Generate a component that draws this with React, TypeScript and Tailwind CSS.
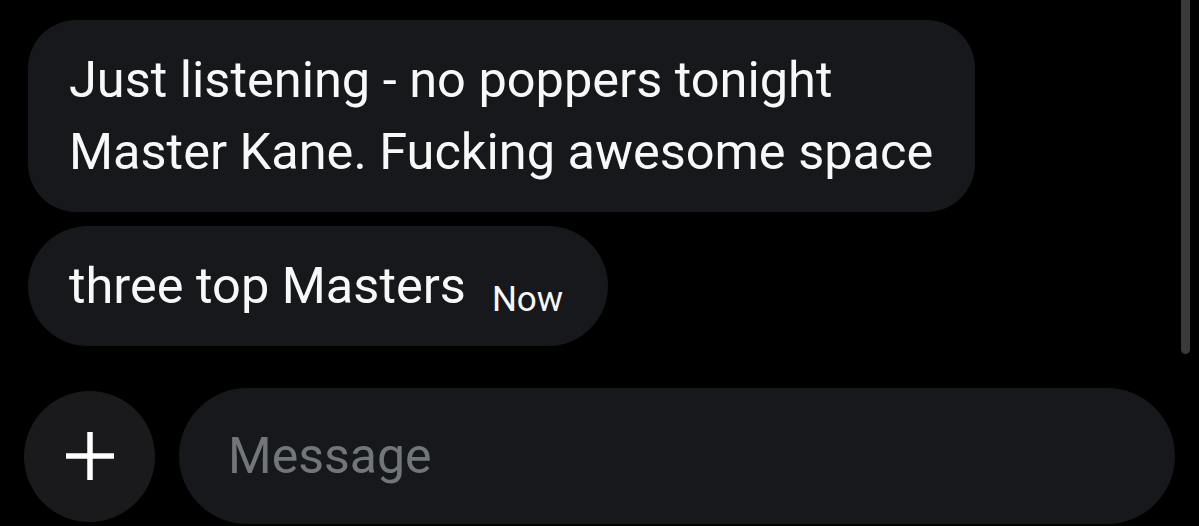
import React from "react";

export default function App() {
  return (
    <div
      className="relative w-[1199px] h-[526px] overflow-hidden bg-black text-[#f7f9f9]"
      style={{ fontFamily: "Roboto, 'Noto Sans', sans-serif" }}
    >
      <div className="absolute right-[9px] top-[-10px] w-[9px] h-[364px] rounded-full bg-[#3a3a3c]" />
      <div className="flex flex-col pl-[28px] pt-[20px]">
        <div className="w-[947px] rounded-[48px] bg-[#16181c] pl-[41px] py-[24px] text-[50.5px] leading-[72px] whitespace-nowrap">
          <div>Just listening - no poppers tonight</div>
          <div>Master Kane. Fucking awesome space</div>
        </div>
        <div className="mt-[14px] w-[580px] h-[120px] flex items-center rounded-full bg-[#16181c] pl-[41px] text-[50.5px] whitespace-nowrap">
          <span className="leading-[72px]">three top Masters</span>
          <span className="ml-[26px] mt-[26px] text-[35px] leading-none">Now</span>
        </div>
      </div>
      <div className="flex items-center gap-[24px] pl-[24px] pr-[24px] mt-[42px]">
        <div className="flex items-center justify-center w-[131px] h-[131px] shrink-0 rounded-full bg-[#1a1a1c]">
          <svg width="50" height="50" viewBox="0 0 50 50">
            <path d="M25 1 V49 M1 25 H49" stroke="#ffffff" strokeWidth="5.5" />
          </svg>
        </div>
        <div className="flex items-center w-[996px] h-[136px] rounded-full bg-[#16181c] pl-[49px] text-[50px] text-[#71767b]">
          Message
        </div>
      </div>
    </div>
  );
}
